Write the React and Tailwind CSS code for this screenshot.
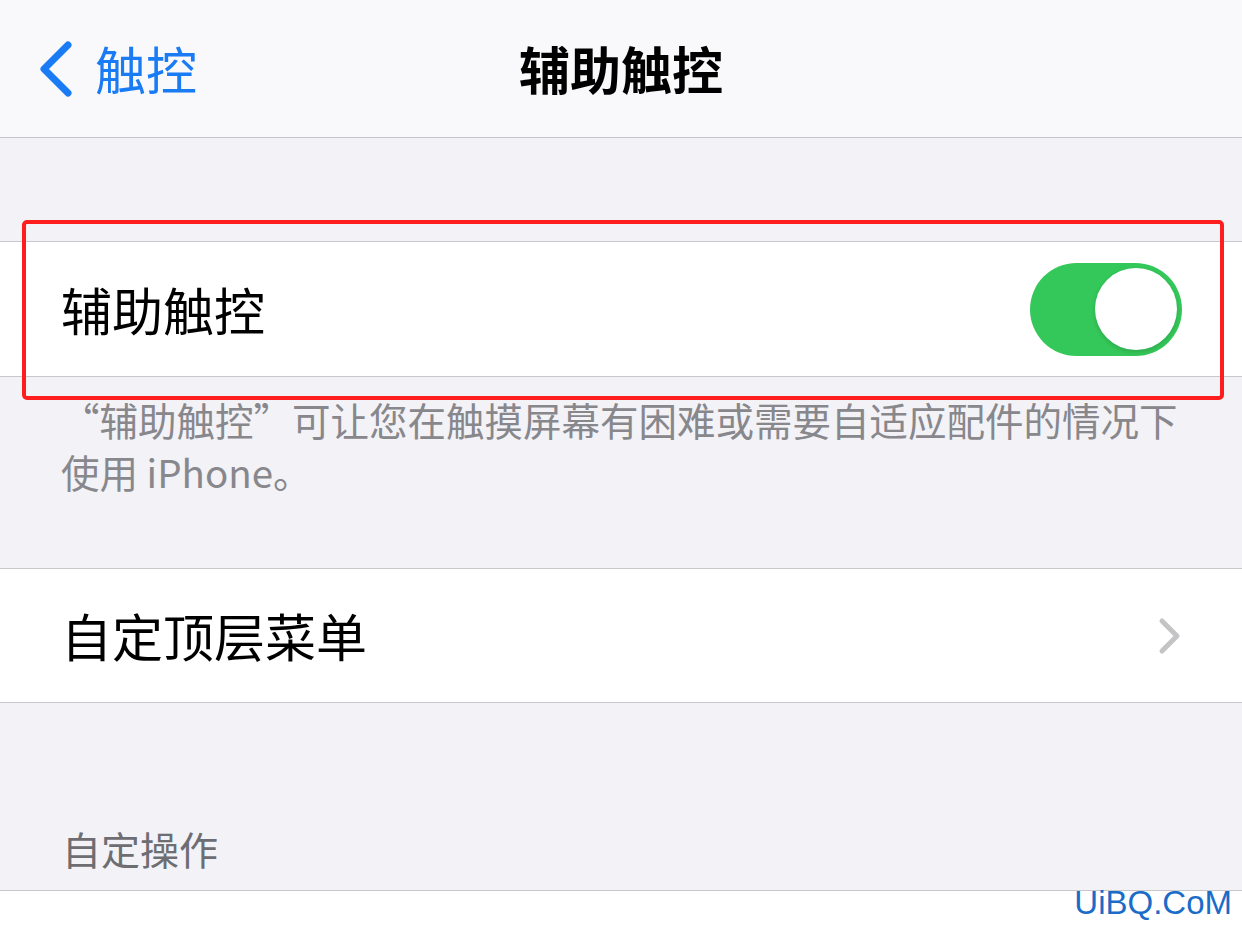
export default function App() {
  const font = { fontFamily: '"Noto Sans CJK SC", "Noto Sans", sans-serif' };
  return (
    <div className="relative w-[1242px] h-[931px] overflow-hidden bg-[#f2f2f7]" style={font}>
      {/* Nav bar */}
      <div className="relative h-[138px] bg-[#f9f9fb] border-b border-[#c6c6c8] flex items-center">
        <div className="flex items-center pl-[38px] text-[#1a7cf5]">
          <svg width="36" height="58" viewBox="0 0 36 58" fill="none">
            <path d="M30 5 L6 29 L30 53" stroke="#1a7cf5" strokeWidth="7" strokeLinecap="round" strokeLinejoin="round" />
          </svg>
          <span className="ml-[21px] text-[51px] leading-none">触控</span>
        </div>
        <div className="absolute inset-0 flex items-center justify-center pointer-events-none">
          <span className="text-[51px] font-bold leading-none text-black">辅助触控</span>
        </div>
      </div>

      <div className="h-[103px]" />

      {/* Toggle row */}
      <div className="bg-white border-y border-[#c8c7cc] h-[136px] flex items-center justify-between pl-[61px] pr-[60px]">
        <span className="text-[51px] leading-none text-black">辅助触控</span>
        <div className="w-[152px] h-[93px] rounded-full bg-[#34c759] flex items-center justify-end pr-[5px]">
          <div className="w-[82px] h-[82px] rounded-full bg-white shadow-[0_2px_4px_rgba(0,0,0,0.15)]" />
        </div>
      </div>

      {/* Description */}
      <div className="pt-[16px] pl-[61px] pr-[44px] text-[38.5px] leading-[52px] text-[#87878c]">
        “辅助触控”可让您在触摸屏幕有困难或需要自适应配件的情况下使用 iPhone。
      </div>

      <div className="h-[71px]" />

      {/* Menu row */}
      <div className="bg-white border-y border-[#c8c7cc] h-[135px] flex items-center justify-between pl-[61px] pr-[60px]">
        <span className="text-[51px] leading-none text-black">自定顶层菜单</span>
        <svg width="24" height="38" viewBox="0 0 24 38" fill="none">
          <path d="M4 4 L19 19 L4 34" stroke="#c4c4c7" strokeWidth="5" strokeLinecap="round" strokeLinejoin="round" />
        </svg>
      </div>

      {/* Section header */}
      <div className="h-[188px] flex items-end pl-[62px] pb-[22px] border-b border-[#c8c7cc]">
        <span className="text-[39px] leading-none text-[#6d6d72]">自定操作</span>
      </div>
      <div className="bg-white h-[60px]" />

      {/* Annotation box */}
      <div className="absolute left-[22px] top-[220px] w-[1202px] h-[180px] border-[4px] border-[#ff1e1e] rounded-[5px] pointer-events-none" />

      {/* Watermark */}
      <div
        className="absolute right-[10px] top-[886px] text-[33px] leading-none text-[#1a6cc8]"
        style={{ fontFamily: '"Liberation Sans", Arial, sans-serif' }}
      >
        UiBQ.CoM
      </div>
    </div>
  );
}
